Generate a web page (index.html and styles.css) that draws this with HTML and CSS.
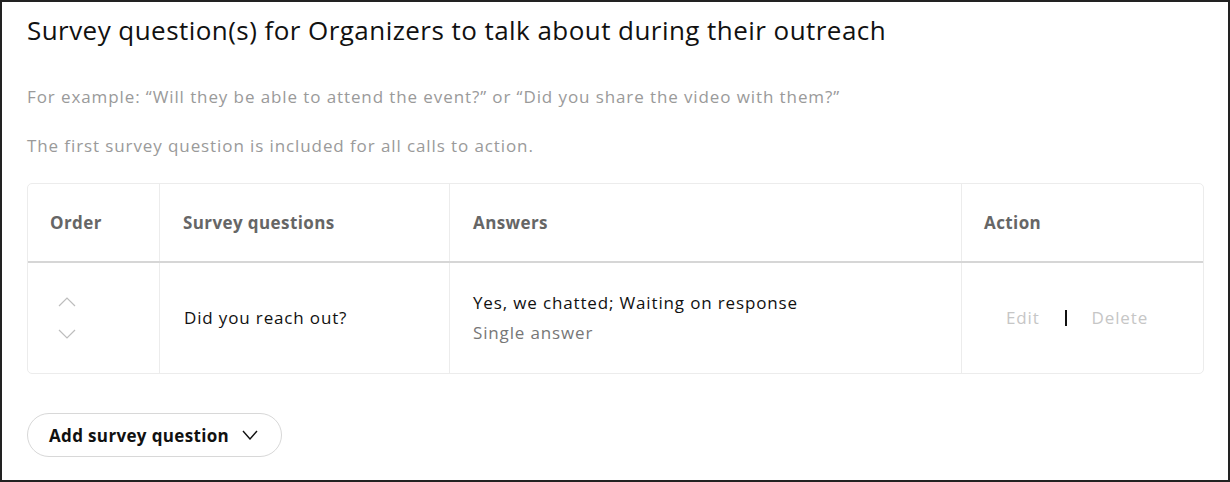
FILE: index.html
```html
<!DOCTYPE html>
<html>
<head>
<meta charset="utf-8">
<link rel="stylesheet" href="styles.css">
</head>
<body>
<div class="frame">
  <h1 class="title">Survey question(s) for Organizers to talk about during their outreach</h1>
  <p class="hint hint-first">For example: “Will they be able to attend the event?” or “Did you share the video with them?”</p>
  <p class="hint">The first survey question is included for all calls to action.</p>
  <div class="table">
    <div class="row head">
      <div class="cell c-order">Order</div>
      <div class="cell c-q">Survey questions</div>
      <div class="cell c-a">Answers</div>
      <div class="cell c-act">Action</div>
    </div>
    <div class="row body">
      <div class="cell c-order">
        <div class="arrows">
          <svg class="arr" width="18" height="10" viewBox="0 0 18 10"><polyline points="1,9 9,1 17,9" fill="none" stroke="#bdbdbd" stroke-width="1.2"/></svg>
          <svg class="arr" width="18" height="10" viewBox="0 0 18 10"><polyline points="1,1 9,9 17,1" fill="none" stroke="#bdbdbd" stroke-width="1.2"/></svg>
        </div>
      </div>
      <div class="cell c-q">Did you reach out?</div>
      <div class="cell c-a">
        <div class="ans">Yes, we chatted; Waiting on response</div>
        <div class="ans-type">Single answer</div>
      </div>
      <div class="cell c-act">
        <div class="actions">
          <span class="act">Edit</span>
          <span class="sep"></span>
          <span class="act">Delete</span>
        </div>
      </div>
    </div>
  </div>
  <button class="add">Add survey question
    <svg width="16" height="10" viewBox="0 0 16 10"><polyline points="1,1 8,9 15,1" fill="none" stroke="#111" stroke-width="1.4"/></svg>
  </button>
</div>
</body>
</html>
```
FILE: styles.css
```css
* { box-sizing: border-box; }
html, body { margin: 0; padding: 0; background: #fff; }
body { font-family: "Open Sans", "Noto Sans", sans-serif; color: #111; }
.frame {
  width: 1230px;
  height: 482px;
  border: 2px solid #222;
  padding: 12px 24px 0 25px;
  display: flex;
  flex-direction: column;
  align-items: flex-start;
}
.title {
  margin: 0;
  font-weight: 400;
  font-size: 26px;
  line-height: 32px;
  color: #111;
  letter-spacing: 0.45px;
}
.hint {
  margin: 0;
  font-size: 17px;
  line-height: 22px;
  color: #9a9a9a;
  letter-spacing: 0.9px;
}
.hint-first { margin-top: 40px; }
.hint + .hint { margin-top: 27px; }
.table {
  margin-top: 26px;
  width: 1177px;
  border: 1px solid #ececec;
  border-radius: 5px;
  display: flex;
  flex-direction: column;
}
.row { display: grid; grid-template-columns: 132px 290px 512px 1fr; }
.row.head { height: 79px; border-bottom: 2px solid #d6d6d6; }
.row.body { height: 110px; }
.cell {
  display: flex;
  flex-direction: column;
  justify-content: center;
  padding-left: 23px;
  border-right: 1px solid #ececec;
}
.cell.c-order { padding-left: 22px; }
.cell:last-child { border-right: none; }
.head .cell { font-weight: 700; font-size: 17px; color: #666; letter-spacing: 0.4px; }
.body .cell { font-size: 17px; color: #111; letter-spacing: 0.85px; }
.body .c-q.cell { padding-left: 24px; padding-bottom: 1px; }
.arrows { display: flex; flex-direction: column; gap: 22px; padding-left: 8px; margin-top: -1px; }
.arr { display: block; }
.ans { line-height: 24px; }
.ans-type { color: #777; line-height: 24px; margin-top: 6px; }
.c-act.cell { padding-left: 22px; }
.body .c-act.cell { padding-left: 44px; padding-bottom: 2px; }
.actions { display: flex; align-items: center; justify-content: flex-start; gap: 25px; }
.act { color: #c6c6c6; }
.sep { display: block; width: 2px; height: 16px; background: #111; margin-top: 1px; }
.add {
  margin-top: 39px;
  height: 44px;
  width: 255px;
  border: 1px solid #d8d8d8;
  border-radius: 22px;
  background: #fff;
  font-family: inherit;
  font-weight: 700;
  font-size: 17px;
  letter-spacing: 0.35px;
  color: #111;
  display: flex;
  align-items: center;
  justify-content: flex-start;
  gap: 13px;
  padding: 0 0 0 21px;
}
.add svg { flex: none; }
```
